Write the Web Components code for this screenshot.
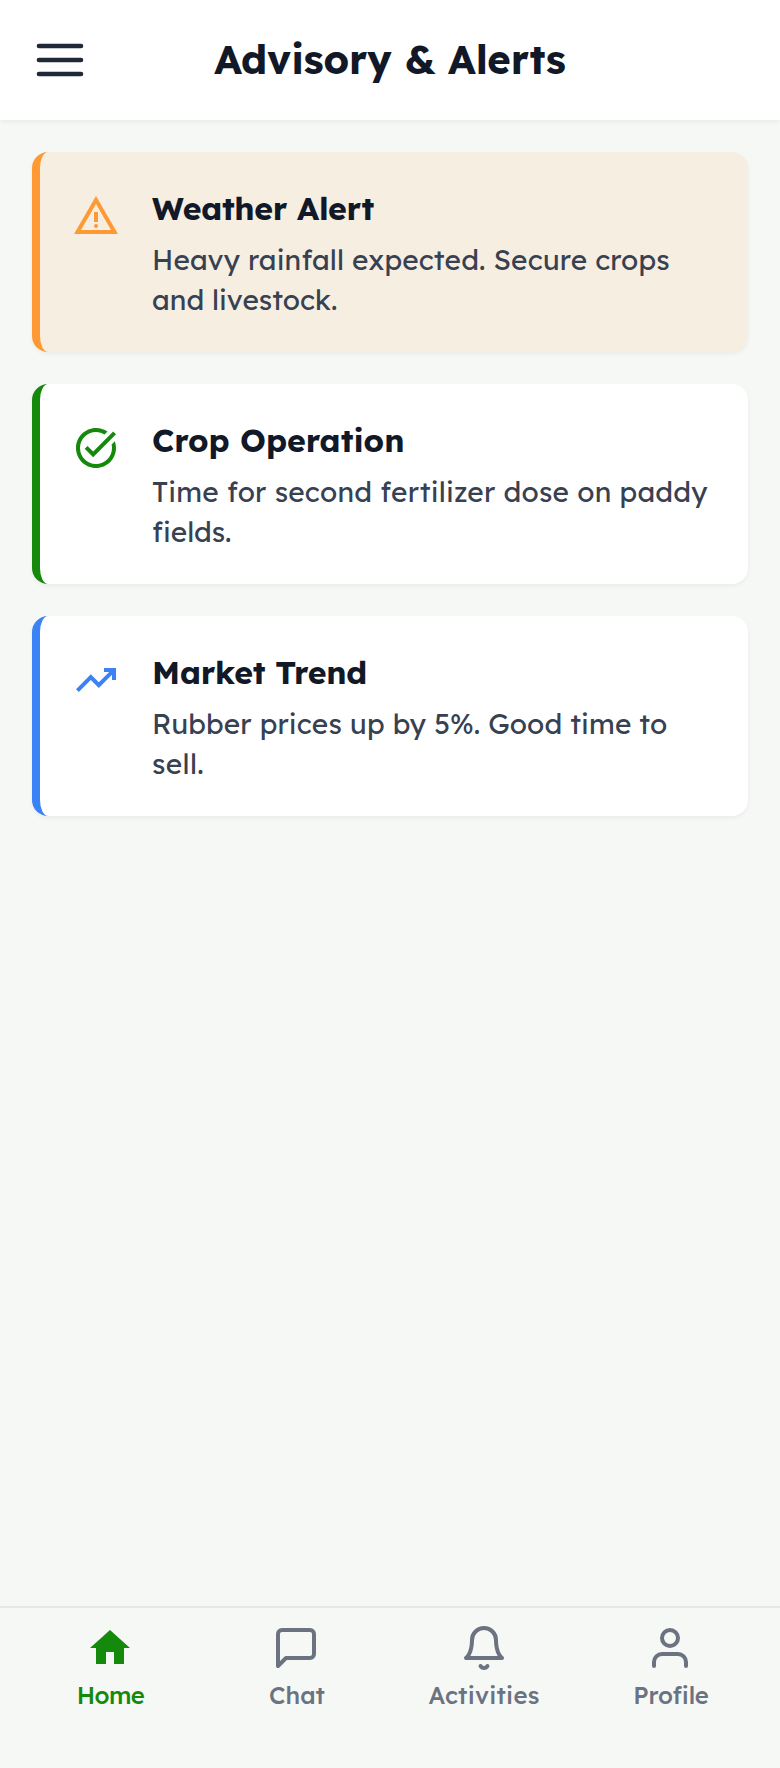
<!DOCTYPE html>
<html lang="en">
<head>
<meta charset="utf-8">
<title>Advisory &amp; Alerts</title>
<style>
html, body { margin: 0; }
body { font-family: "Lexend", "Inter", "Liberation Sans", sans-serif; background: #f6f8f6; color: #111827; }
</style>
</head>
<body>
<advisory-screen></advisory-screen>
<script>
const ICONS = {
  menu: '<path d="M3 6h18M3 12h18M3 18h18" fill="none" stroke="currentColor" stroke-width="2" stroke-linecap="round"/>',
  warning: '<path fill="currentColor" d="M12 5.99L19.53 19H4.47L12 5.99M12 2L1 21h22L12 2zM13 10h-2v5h2z"/><circle cx="12" cy="17" r="1" fill="currentColor"/>',
  task: '<path fill="currentColor" d="M22 5.18L10.59 16.6l-4.24-4.24 1.41-1.41 2.83 2.83 10-10L22 5.18zm-2.21 5.04c.13.57.21 1.17.21 1.78 0 4.42-3.58 8-8 8s-8-3.58-8-8 3.58-8 8-8c1.58 0 3.04.46 4.28 1.25l1.44-1.44C16.1 2.67 14.13 2 12 2 6.48 2 2 6.48 2 12s4.48 10 10 10 10-4.48 10-10c0-1.19-.22-2.33-.6-3.39l-1.61 1.61z"/>',
  trend: '<path fill="currentColor" d="M3.4 18L2 16.6l7.4-7.45 4 4L18.6 8H16V6h6v6h-2V9.4L13.4 16l-4-4z"/>',
  home: '<path fill="currentColor" d="M10 20v-6h4v6h5v-8h3L12 3 2 12h3v8z"/>',
  chat: '<path fill="none" stroke="currentColor" stroke-width="2" stroke-linecap="round" stroke-linejoin="round" d="M21 15a2 2 0 0 1-2 2H7l-4 4V5a2 2 0 0 1 2-2h14a2 2 0 0 1 2 2z"/>',
  bell: '<path fill="none" stroke="currentColor" stroke-width="2" stroke-linecap="round" stroke-linejoin="round" d="M18 8A6 6 0 0 0 6 8c0 7-3 9-3 9h18s-3-2-3-9M13.73 21a2 2 0 0 1-3.46 0"/>',
  user: '<g fill="none" stroke="currentColor" stroke-width="2" stroke-linecap="round" stroke-linejoin="round"><path d="M20 21v-2a4 4 0 0 0-4-4H8a4 4 0 0 0-4 4v2"/><circle cx="12" cy="7" r="4"/></g>'
};

class UiIcon extends HTMLElement {
  connectedCallback() {
    this.attachShadow({ mode: 'open' }).innerHTML = `
      <style>
        :host { display: block; flex: none; width: 48px; height: 48px; }
        svg { display: block; width: 100%; height: 100%; }
      </style>
      <svg viewBox="0 0 24 24" aria-hidden="true">${ICONS[this.getAttribute('name')]}</svg>`;
  }
}
customElements.define('ui-icon', UiIcon);

class AppHeader extends HTMLElement {
  connectedCallback() {
    this.attachShadow({ mode: 'open' }).innerHTML = `
      <style>
        :host { display: grid; grid-template-columns: 56px 1fr 56px; align-items: center; height: 120px; box-sizing: border-box; padding: 0 32px; background: #fff; box-shadow: 0 2px 4px rgba(0,0,0,.05); }
        ui-icon { width: 56px; height: 56px; color: #1f2937; }
        h1 { margin: 0 0 2px; text-align: center; font-size: 40px; line-height: 56px; font-weight: 700; letter-spacing: -.12px; white-space: nowrap; }
      </style>
      <ui-icon name="menu"></ui-icon>
      <h1><slot></slot></h1>`;
  }
}
customElements.define('app-header', AppHeader);

class AlertCard extends HTMLElement {
  connectedCallback() {
    this.attachShadow({ mode: 'open' }).innerHTML = `
      <style>
        :host { display: flex; gap: 32px; height: 200px; box-sizing: border-box; padding: 32px; border-left: 8px solid var(--accent); border-radius: 16px; background: var(--surface, #fff); box-shadow: 0 2px 4px rgba(0,0,0,.05); }
        ui-icon { color: var(--accent); margin-top: 8px; }
        .text { flex: 1; margin-right: -8px; }
        h2 { margin: 0 0 8px; font-size: 32px; line-height: 48px; font-weight: 700; letter-spacing: var(--title-track, 0); }
        p { margin: 0; color: #374151; font-size: 28px; line-height: 40px; }
      </style>
      <ui-icon name="${this.getAttribute('icon')}"></ui-icon>
      <div class="text"><h2><slot name="title"></slot></h2><p><slot></slot></p></div>`;
  }
}
customElements.define('alert-card', AlertCard);

class NavItem extends HTMLElement {
  connectedCallback() {
    this.attachShadow({ mode: 'open' }).innerHTML = `
      <style>
        :host { display: flex; flex-direction: column; align-items: center; gap: 7px; color: #6b7280; }
        :host([active]) { color: #15890b; }
        span { font-size: 24px; line-height: 32px; font-weight: 500; letter-spacing: var(--track, 0); padding-left: var(--nudge, 0); }
      </style>
      <ui-icon name="${this.getAttribute('icon')}"></ui-icon>
      <span><slot></slot></span>`;
  }
}
customElements.define('nav-item', NavItem);

class BottomNav extends HTMLElement {
  connectedCallback() {
    this.attachShadow({ mode: 'open' }).innerHTML = `
      <style>
        :host { display: grid; grid-template-columns: 188px 184px 192px 180px; align-items: start; height: 162px; box-sizing: border-box; padding: 16px 16px 0; border-top: 2px solid #e5e7eb; background: #f6f8f6; }
      </style><slot></slot>`;
  }
}
customElements.define('bottom-nav', BottomNav);

class AdvisoryScreen extends HTMLElement {
  connectedCallback() {
    this.attachShadow({ mode: 'open' }).innerHTML = `
      <style>
        :host { display: flex; flex-direction: column; height: 1768px; }
        main { flex: 1; display: flex; flex-direction: column; gap: 32px; padding: 32px; }
      </style>
      <app-header>Advisory &amp; Alerts</app-header>
      <main>
        <alert-card icon="warning" style="--accent:#ff9933;--surface:#f6eee1;--title-track:-.3px">
          <span slot="title">Weather Alert</span><span style="letter-spacing:.13px">Heavy rainfall expected. Secure crops</span> <span>and livestock.</span></alert-card>
        <alert-card icon="task" style="--accent:#15890b">
          <span slot="title">Crop Operation</span><span style="letter-spacing:.21px">Time for second fertilizer dose on paddy</span> <span>fields.</span></alert-card>
        <alert-card icon="trend" style="--accent:#3b82f6;--title-track:-.22px">
          <span slot="title">Market Trend</span><span style="letter-spacing:.11px">Rubber prices up by 5%. Good time to</span> <span style="letter-spacing:.35px">sell.</span></alert-card>
      </main>
      <bottom-nav>
        <nav-item icon="home" active style="--track:-.6px;--nudge:1px">Home</nav-item>
        <nav-item icon="chat" style="--nudge:2px">Chat</nav-item>
        <nav-item icon="bell" style="--track:.25px">Activities</nav-item>
        <nav-item icon="user" style="--track:-.1px;--nudge:2px">Profile</nav-item>
      </bottom-nav>`;
  }
}
customElements.define('advisory-screen', AdvisoryScreen);
</script>
</body>
</html>
